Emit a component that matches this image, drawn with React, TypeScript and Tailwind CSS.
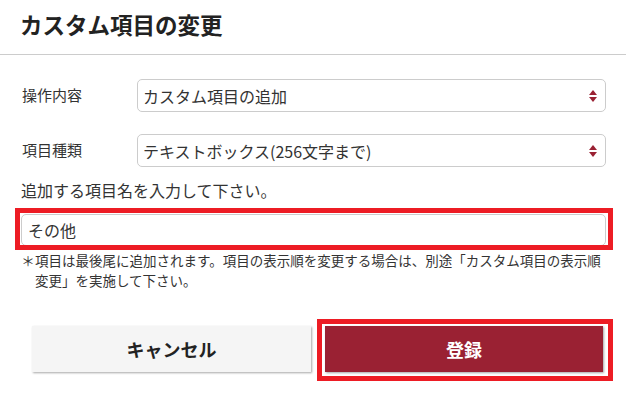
import React from "react";

function Arrows() {
  return (
    <svg width="8" height="12" viewBox="0 0 8 12" className="block">
      <polygon points="4,0 8,5 0,5" fill="#9a2133" />
      <polygon points="0,7 8,7 4,12" fill="#9a2133" />
    </svg>
  );
}

function SelectBox({ value }: { value: string }) {
  return (
    <div className="w-[469px] h-[33px] border border-[#cccccc] rounded-[5px] bg-white flex items-center justify-between pl-[5px] pr-[8px] text-[16px] text-[#333]">
      <span className="leading-none">{value}</span>
      <Arrows />
    </div>
  );
}

export default function App() {
  return (
    <div className="w-[626px] h-[419px] bg-white text-[#333] font-['Meiryo','Noto_Sans_CJK_JP',sans-serif] overflow-hidden">
      <div className="h-[55px] border-b border-[#cccccc] pl-[20px] pt-[8px]">
        <h1 className="text-[22.5px] leading-[32px] font-bold text-[#222]">カスタム項目の変更</h1>
      </div>
      <div className="pl-[20px]">
        <div className="mt-[24px] flex items-center">
          <div className="w-[117px] pl-[2px] text-[15px]">操作内容</div>
          <SelectBox value="カスタム項目の追加" />
        </div>
        <div className="mt-[22px] flex items-center">
          <div className="w-[117px] pl-[2px] text-[15px]">項目種類</div>
          <SelectBox value="テキストボックス(256文字まで)" />
        </div>
        <div className="mt-[12px] pl-[1px] text-[16px] leading-[22px]">追加する項目名を入力して下さい。</div>
        <div className="relative mt-[13px] ml-[1px] w-[585px]">
          <div className="h-[32px] border border-[#cccccc] rounded-[5px] bg-white flex items-center pl-[6px] text-[16px] text-[#333]">
            その他
          </div>
          <div className="absolute left-[-6px] top-[-6px] w-[598px] h-[42px] border-[5px] border-[#ed1c24] pointer-events-none" />
        </div>
        <div className="mt-[4px] flex pl-[1px] text-[13.5px] leading-[20px] whitespace-nowrap">
          <span className="w-[14px] shrink-0 text-center">＊</span>
          <span>
            項目は最後尾に追加されます。項目の表示順を変更する場合は、別途「カスタム項目の表示順
            <br />
            変更」を実施して下さい。
          </span>
        </div>
      </div>
      <div className="mt-[36px] pl-[32px] flex gap-[14px]">
        <button className="w-[279px] h-[46px] bg-[#f5f5f5] shadow-[1px_1px_2px_rgba(0,0,0,0.35)] text-[18px] font-bold text-[#222]">
          キャンセル
        </button>
        <div className="relative">
          <button className="w-[278px] h-[46px] bg-[#9a2133] shadow-[1px_1px_2px_rgba(0,0,0,0.35)] text-[18px] font-bold text-white">
            登録
          </button>
          <div className="absolute left-[-8px] top-[-7px] w-[296px] h-[62px] border-[5px] border-[#ed1c24] pointer-events-none" />
        </div>
      </div>
    </div>
  );
}
